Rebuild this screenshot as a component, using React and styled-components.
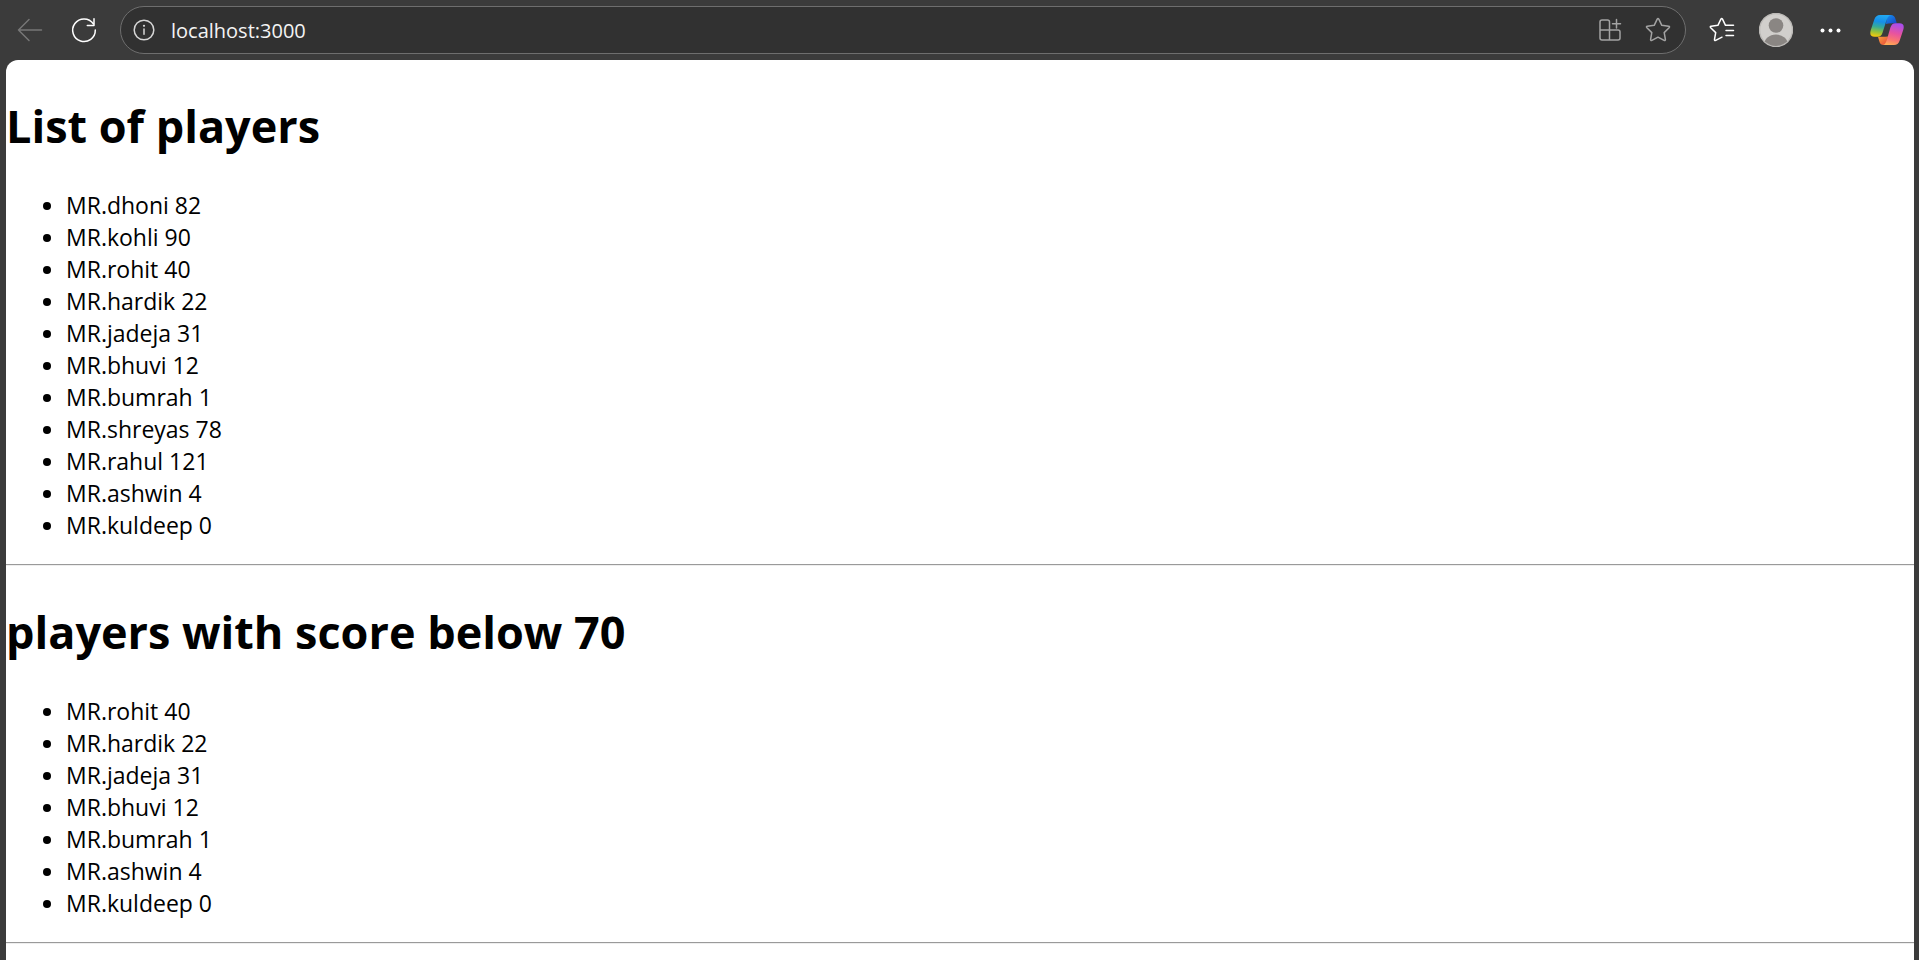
import React from "react";
import styled, { createGlobalStyle } from "styled-components";

const GlobalStyle = createGlobalStyle`
  *, *::before, *::after { box-sizing: border-box; }
  body {
    margin: 0;
    background: #3b3b3b;
    font-family: "Open Sans", "Noto Sans", sans-serif;
  }
`;

const Browser = styled.div`
  display: flex;
  flex-direction: column;
  height: 100vh;
  background: #3b3b3b;
`;

const Toolbar = styled.header`
  display: flex;
  align-items: center;
  flex: none;
  gap: 14px;
  height: 60px;
  padding: 0 7px 0 8px;
`;

const ButtonGroup = styled.div`
  display: flex;
  gap: 10px;
`;

const IconButton = styled.button`
  display: flex;
  align-items: center;
  justify-content: center;
  flex: none;
  width: ${({ $width }) => $width || 44}px;
  height: 44px;
  padding: 0;
  border: 0;
  background: transparent;
  color: ${({ $color }) => $color || "#ffffff"};

  svg {
    display: block;
    fill: none;
    stroke: currentColor;
    stroke-width: 1.5;
    stroke-linecap: round;
    stroke-linejoin: round;
  }
`;

const AddressBar = styled.form`
  display: flex;
  align-items: center;
  flex: 1;
  min-width: 0;
  height: 48px;
  padding: 0 9px 0 5px;
  border: 1px solid #6e6e6e;
  border-radius: 24px;
  background: #313131;
`;

const UrlInput = styled.input`
  flex: 1;
  min-width: 0;
  height: 40px;
  margin: 0 0 0 9px;
  padding: 0;
  border: 0;
  outline: 0;
  background: transparent;
  color: #f4f4f4;
  font-family: inherit;
  font-size: 20px;
`;

const Page = styled.main`
  flex: 1;
  min-height: 0;
  margin: 0 5px 0 6px;
  overflow: hidden;
  border-radius: 12px 12px 0 0;
  background: #ffffff;
  color: #000000;
`;

const Title = styled.h1`
  margin: 34px 0 31px;
  font-size: 45px;
  font-weight: 700;
  line-height: 64px;
`;

const PlayerList = styled.ul`
  margin: 0 0 23px;
  padding-left: 60px;
  font-size: 23px;
  line-height: 32px;
`;

const Divider = styled.hr`
  height: 2px;
  margin: 0;
  border: 0;
  border-top: 1px solid #9a9a9a;
  border-bottom: 1px solid #eeeeee;
`;

const BackIcon = () => (
  <svg width="28" height="28" viewBox="0 0 28 28">
    <path d="M25.5 14H2.5M13 3.5 2.5 14 13 24.5" />
  </svg>
);

const RefreshIcon = () => (
  <svg width="28" height="28" viewBox="0 0 28 28">
    <path d="M25.3 14A11.3 11.3 0 1 1 23.3 7.800" />
    <path d="M24 2.800V9.5H17.3" />
  </svg>
);

const InfoIcon = () => (
  <svg width="24" height="24" viewBox="0 0 24 24">
    <circle cx="12" cy="12" r="9.800" />
    <path d="M12 11V16.200" />
    <circle cx="12" cy="7.800" r="1.100" fill="currentColor" stroke="none" />
  </svg>
);

const AppsIcon = () => (
  <svg width="26" height="26" viewBox="0 0 26 26">
    <path d="M12.5 13V5a2 2 0 0 0-2-2H5a2 2 0 0 0-2 2V21a2 2 0 0 0 2 2H21a2 2 0 0 0 2-2V15a2 2 0 0 0-2-2H3M12.5 13V23M19.5 2.500V11M15.500 6.800H23.500" />
  </svg>
);

const StarIcon = () => (
  <svg width="28" height="28" viewBox="0 0 28 28">
    <path d="M13.200 3.100Q14 1.800 14.800 3.100L17.800 9.300 24.600 10.300Q26.200 10.600 25.100 11.800L20.200 16.600 21.400 23.400Q21.500 25 20.100 24.400L14 21.200 7.900 24.400Q6.500 25 6.600 23.400L7.800 16.600 2.900 11.800Q1.800 10.600 3.400 10.300L10.200 9.300Z" />
  </svg>
);

const FavoritesIcon = () => (
  <svg width="28" height="28" viewBox="0 0 28 28">
    <path d="M25.500 9.300H17.500L14.500 3.100Q13.700 1.800 12.900 3.100L9.900 9.300 3.200 10.300Q1.600 10.600 2.700 11.800L7.700 16.600 6.500 23.400Q6.300 25 7.700 24.400L14 21.200M18 14.500H25.500M18 19.500H25.500" />
  </svg>
);

const AvatarIcon = () => (
  <svg width="34" height="34" viewBox="0 0 34 34">
    <defs>
      <clipPath id="avatar-clip">
        <circle cx="17" cy="17" r="16" />
      </clipPath>
    </defs>
    <circle cx="17" cy="17" r="16.500" fill="#d1cfcc" stroke="#bcbab7" />
    <g clipPath="url(#avatar-clip)" fill="#8a8683" stroke="none">
      <circle cx="17" cy="12.500" r="7.300" />
      <ellipse cx="17" cy="32" rx="12" ry="10.500" />
    </g>
  </svg>
);

const MoreIcon = () => (
  <svg width="24" height="24" viewBox="0 0 24 24">
    <g fill="currentColor" stroke="none">
      <circle cx="4.500" cy="12.500" r="2" />
      <circle cx="12.500" cy="12.500" r="2" />
      <circle cx="20.500" cy="12.500" r="2" />
    </g>
  </svg>
);

const CopilotIcon = () => (
  <svg width="34" height="32" viewBox="0 0 34 32">
    <defs>
      <linearGradient id="cp-left" x1="0.5" y1="0" x2="0.35" y2="1">
        <stop offset="0" stopColor="#22a8f2" />
        <stop offset="0.3" stopColor="#168fe8" />
        <stop offset="0.55" stopColor="#36aa98" />
        <stop offset="0.78" stopColor="#92c23e" />
        <stop offset="1" stopColor="#f4ca0c" />
      </linearGradient>
      <linearGradient id="cp-right" x1="0.6" y1="0" x2="0.35" y2="1">
        <stop offset="0" stopColor="#a84ded" />
        <stop offset="0.45" stopColor="#e8539f" />
        <stop offset="0.75" stopColor="#fa7472" />
        <stop offset="1" stopColor="#ffac55" />
      </linearGradient>
      <linearGradient id="cp-top" x1="0" y1="0" x2="1" y2="1">
        <stop offset="0" stopColor="#1593ee" />
        <stop offset="1" stopColor="#1742c5" />
      </linearGradient>
      <linearGradient id="cp-bottom" x1="0" y1="0" x2="1" y2="1">
        <stop offset="0" stopColor="#f8a03a" />
        <stop offset="1" stopColor="#e9463d" />
      </linearGradient>
    </defs>
    <g stroke="none">
      <path fill="url(#cp-top)" d="M17 1H21Q24.300 1 25.300 4.500L26.800 9.300H23Q20 9.300 18.500 9.500L16 10Z" />
      <path fill="url(#cp-bottom)" d="M8 22.700H15L18 22.500 17.500 28Q16.300 31 13.500 31 10.400 31 9.500 28Z" />
      <path fill="url(#cp-left)" d="M21.500 1H10Q5.800 1 4.300 5.500L.8 16Q-1.200 22.800 4.500 22.800H7.500Q11.300 22.800 12.600 18.500L16.600 6Q18.300 1 21.500 1Z" />
      <path fill="url(#cp-right)" d="M12.500 31H24Q28.200 31 29.700 26.500L33.200 16Q35.200 9.200 29.500 9.200H25.500Q21.700 9.200 20.400 13.500L16.800 26Q15.300 31 12.500 31Z" />
    </g>
  </svg>
);

const players = [
  { name: "dhoni", score: 82 },
  { name: "kohli", score: 90 },
  { name: "rohit", score: 40 },
  { name: "hardik", score: 22 },
  { name: "jadeja", score: 31 },
  { name: "bhuvi", score: 12 },
  { name: "bumrah", score: 1 },
  { name: "shreyas", score: 78 },
  { name: "rahul", score: 121 },
  { name: "ashwin", score: 4 },
  { name: "kuldeep", score: 0 },
];

function Players({ title, items }) {
  return (
    <>
      <Title>{title}</Title>
      <PlayerList>
        {items.map(({ name, score }) => (
          <li key={name}>{`MR.${name} ${score}`}</li>
        ))}
      </PlayerList>
      <Divider />
    </>
  );
}

export default function App() {
  return (
    <Browser>
      <GlobalStyle />
      <Toolbar>
        <ButtonGroup>
          <IconButton aria-label="Back" $color="#777777"><BackIcon /></IconButton>
          <IconButton aria-label="Refresh"><RefreshIcon /></IconButton>
        </ButtonGroup>
        <AddressBar onSubmit={(e) => e.preventDefault()}>
          <IconButton type="button" aria-label="View site information" $width={36} $color="#d6d6d6"><InfoIcon /></IconButton>
          <UrlInput aria-label="Address" type="text" defaultValue="localhost:3000" spellCheck={false} />
          <IconButton type="button" aria-label="App available" $width={60} $color="#a3a3a3"><AppsIcon /></IconButton>
          <IconButton type="button" aria-label="Add to favorites" $width={36} $color="#a3a3a3"><StarIcon /></IconButton>
        </AddressBar>
        <ButtonGroup>
          <IconButton aria-label="Favorites"><FavoritesIcon /></IconButton>
          <IconButton aria-label="Profile"><AvatarIcon /></IconButton>
          <IconButton aria-label="Settings and more"><MoreIcon /></IconButton>
          <IconButton aria-label="Copilot" $width={50}><CopilotIcon /></IconButton>
        </ButtonGroup>
      </Toolbar>
      <Page>
        <Players title="List of players" items={players} />
        <Players title="players with score below 70" items={players.filter((p) => p.score < 70)} />
      </Page>
    </Browser>
  );
}
